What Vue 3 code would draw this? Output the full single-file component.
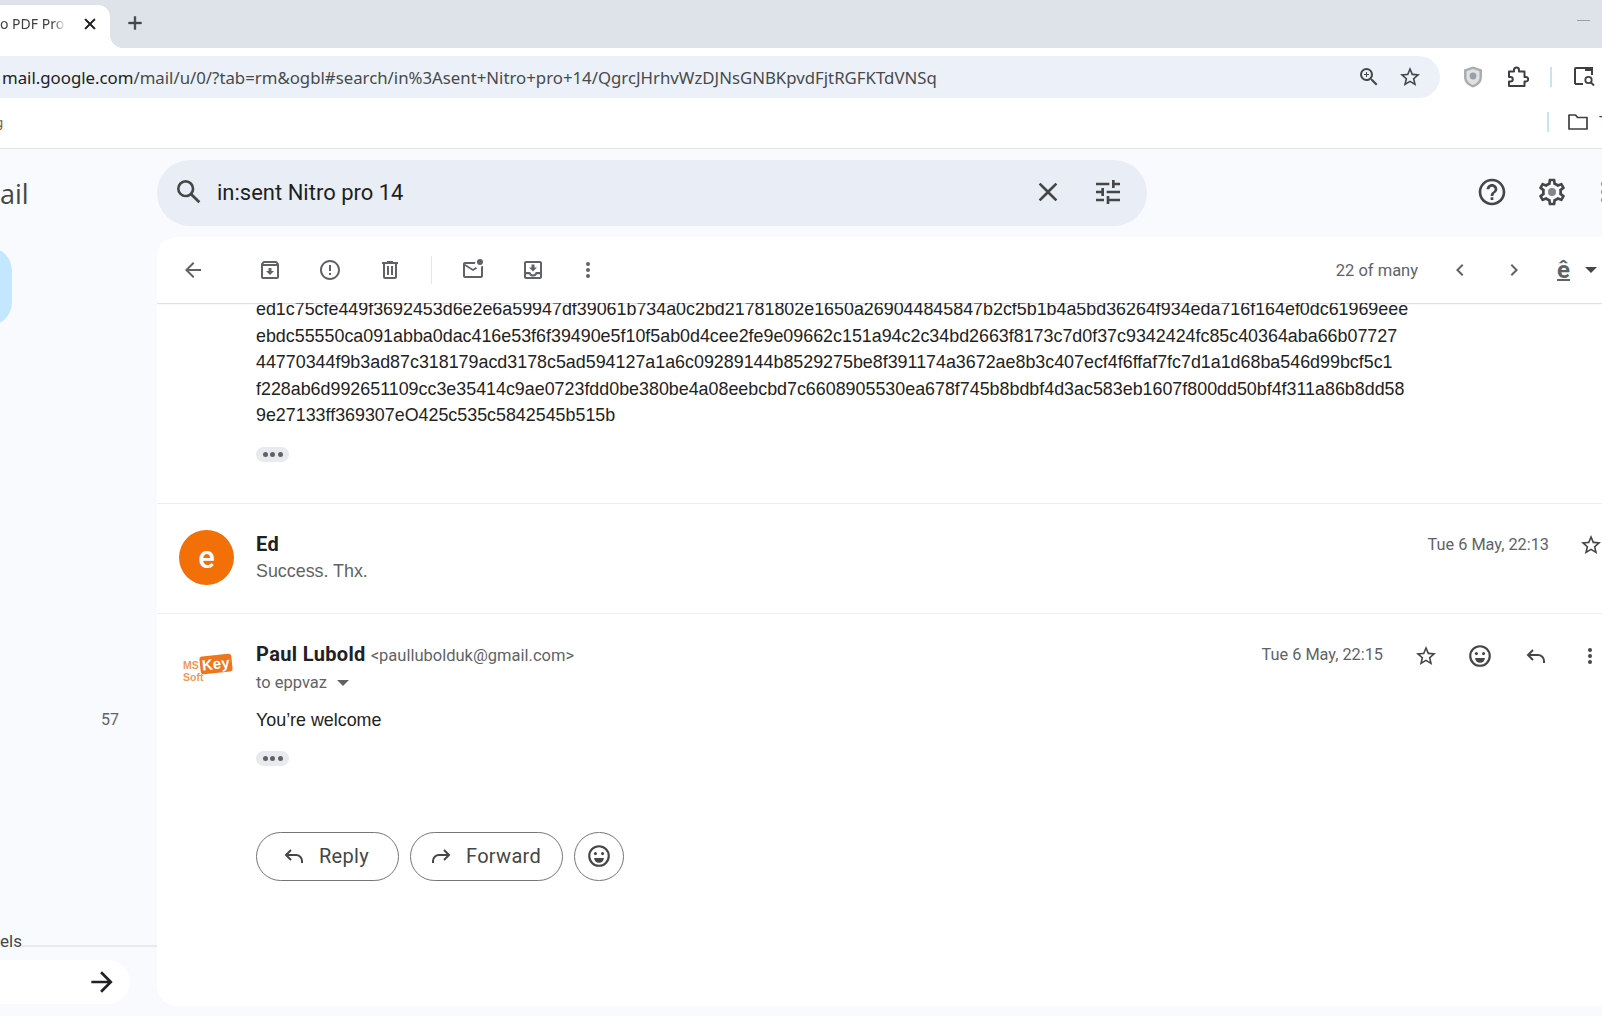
<template>
  <div class="page">
    <!-- browser chrome -->
    <div class="tabstrip">
      <div class="tab">
        <span class="tab-title">o PDF Pro</span>
        <svg class="tab-close" viewBox="0 0 24 24"><path :d="icons.close" /></svg>
      </div>
      <svg class="new-tab" viewBox="0 0 24 24"><path d="M11 5h2v6h6v2h-6v6h-2v-6H5v-2h6z" /></svg>
      <span class="minimize"></span>
    </div>

    <div class="browser-bar">
      <div class="omnibox">
        <span class="url"><span class="url-host">mail.google.com</span>/mail/u/0/?tab=rm&amp;ogbl#search/in%3Asent+Nitro+pro+14/QgrcJHrhvWzDJNsGNBKpvdFjtRGFKTdVNSq</span>
        <svg class="omni-zoom" viewBox="0 0 24 24"><path :d="icons.zoomIn" /></svg>
        <svg class="omni-star" viewBox="0 0 24 24"><path :d="icons.star" /></svg>
      </div>
      <svg class="ext-shield" viewBox="0 0 24 24">
        <path d="M12 1.500l9 3v7.500c0 5.200-3.600 8.800-9 10.500-5.400-1.700-9-5.300-9-10.500V4.500z" fill="#a9adb1" />
        <path d="M12 4l6.500 2.200V12c0 3.900-2.600 6.500-6.500 8-3.900-1.500-6.500-4.100-6.500-8V6.200z" fill="#dfe1e3" />
        <circle cx="12" cy="11" r="3.400" fill="#9aa0a6" />
      </svg>
      <svg class="ext-puzzle" viewBox="0 0 24 24">
        <path d="M4 6.500h5V5a2.500 2.500 0 0 1 5 0v1.500h5.500V12H21a2.200 2.200 0 0 1 0 4.400h-1.500V21H4v-4.500h1.500a2.200 2.200 0 0 0 0-4.500H4z" fill="none" stroke="#3c4043" stroke-width="2" stroke-linejoin="round" />
      </svg>
      <span class="bar-sep"></span>
      <svg class="side-search" viewBox="0 0 24 24">
        <path d="M3 20V5a1 1 0 0 1 1-1h16v7M3 20h8" fill="none" stroke="#3c4043" stroke-width="2" />
        <path d="M13 3h8v4h-8z" fill="#3c4043" />
        <circle cx="16.500" cy="16" r="3.200" fill="none" stroke="#3c4043" stroke-width="1.800" />
        <path d="M19 18.500l3 3" stroke="#3c4043" stroke-width="1.800" />
      </svg>
    </div>

    <div class="bookmarks">
      <span class="bm-cut">g</span>
      <span class="bm-sep"></span>
      <svg class="bm-folder" viewBox="0 0 24 24">
        <path d="M3 5h6.500l2 2.500H21V19H3z" fill="none" stroke="#3c4043" stroke-width="1.700" stroke-linejoin="round" />
      </svg>
      <span class="bm-more">T</span>
    </div>

    <!-- gmail -->
    <div class="gmail">
      <aside class="sidebar">
        <div class="brand">ail</div>
        <div class="compose"></div>
        <div class="count">57</div>
        <div class="labels-row">
          <span class="labels-text">els</span>
          <span class="labels-line"></span>
        </div>
        <div class="meet-pill">
          <svg class="meet-arrow" viewBox="0 0 24 24"><path :d="icons.arrow" /></svg>
        </div>
      </aside>

      <main class="main">
        <header class="top">
          <div class="search">
            <svg class="ic32" viewBox="0 0 24 24"><path :d="icons.search" /></svg>
            <span class="search-text">in:sent Nitro pro 14</span>
            <svg class="ic32 search-clear" viewBox="0 0 24 24"><path :d="icons.close" /></svg>
            <svg class="ic32 search-tune" viewBox="0 0 24 24"><path :d="icons.tune" /></svg>
          </div>
          <svg class="ic32 top-help" viewBox="0 0 24 24"><path :d="icons.help" /></svg>
          <svg class="ic32 top-gear" viewBox="0 0 24 24">
            <path :d="icons.gear" />
            <circle cx="12" cy="12" r="3" fill="#80868b" />
          </svg>
          <svg class="ic32 top-more" viewBox="0 0 24 24"><path :d="icons.more" /></svg>
        </header>

        <section class="card">
          <div class="toolbar">
            <svg class="ic24" viewBox="0 0 24 24"><path :d="icons.back" /></svg>
            <svg class="ic24 tb-first" viewBox="0 0 24 24"><path :d="icons.archive" /></svg>
            <svg class="ic24" viewBox="0 0 24 24"><path :d="icons.report" /></svg>
            <svg class="ic24" viewBox="0 0 24 24"><path :d="icons.trash" /></svg>
            <span class="tb-sep"></span>
            <svg class="ic24 tb-mail" viewBox="0 0 24 24">
              <path :d="icons.unread" />
              <circle cx="19" cy="4" r="3" />
            </svg>
            <svg class="ic24" viewBox="0 0 24 24">
              <path :d="icons.move" />
              <path class="tray" d="M5 16.200h3c.8 1.400 2.300 2.300 4 2.300s3.200-.9 4-2.300h3V19H5z" />
            </svg>
            <svg class="ic24 tb-more" viewBox="0 0 24 24"><path :d="icons.more" /></svg>

            <span class="pager">22 of many</span>
            <svg class="ic24 pager-prev" viewBox="0 0 24 24"><path :d="icons.prev" /></svg>
            <svg class="ic24 pager-next" viewBox="0 0 24 24"><path :d="icons.next" /></svg>
            <span class="input-tool">ê</span>
            <span class="caret input-caret"></span>
          </div>

          <div class="thread">
            <div class="hash-block">
              <div v-for="line in hashLines" :key="line" class="hash-line">{{ line }}</div>
              <div class="dots-pill"><i></i><i></i><i></i></div>
            </div>

            <div class="msg msg-collapsed">
              <div class="avatar-col">
                <div class="avatar">e</div>
              </div>
              <div class="msg-body">
                <div class="name">Ed</div>
                <div class="snippet">Success. Thx.</div>
              </div>
              <div class="msg-right ed-right">
                <span class="date">Tue 6 May, 22:13</span>
                <svg class="ic24 ed-star" viewBox="0 0 24 24"><path :d="icons.star" /></svg>
              </div>
            </div>

            <div class="msg msg-open">
              <div class="avatar-col">
                <div class="logo">
                  <div class="logo-top"><span class="logo-ms">MS</span><span class="logo-key">Key</span></div>
                  <div class="logo-soft">Soft</div>
                </div>
              </div>
              <div class="msg-body">
                <div class="name-line">
                  <span class="name">Paul Lubold</span>
                  <span class="email">&lt;paullubolduk@gmail.com&gt;</span>
                </div>
                <div class="to-line">to eppvaz <span class="caret to-caret"></span></div>
                <div class="content">You’re welcome</div>
                <div class="dots-pill"><i></i><i></i><i></i></div>
                <div class="actions">
                  <button class="pill-btn reply-btn">
                    <svg class="ic24" viewBox="0 0 24 24"><path class="arrow-line" :d="icons.reply" /></svg>
                    Reply
                  </button>
                  <button class="pill-btn forward-btn">
                    <svg class="ic24 flip" viewBox="0 0 24 24"><path class="arrow-line" :d="icons.reply" /></svg>
                    Forward
                  </button>
                  <button class="pill-btn emoji-btn">
                    <svg class="ic26" viewBox="0 0 24 24">
                      <circle class="face" cx="12" cy="12" r="9" />
                      <circle cx="8.700" cy="9.800" r="1.400" />
                      <circle cx="15.300" cy="9.800" r="1.400" />
                      <path d="M7.500 13.800h9a4.500 4.500 0 0 1-9 0z" />
                    </svg>
                  </button>
                </div>
              </div>
              <div class="msg-right open-right">
                <span class="date">Tue 6 May, 22:15</span>
                <svg class="ic24 open-star" viewBox="0 0 24 24"><path :d="icons.star" /></svg>
                <svg class="ic26 open-smile" viewBox="0 0 24 24">
                  <circle class="face" cx="12" cy="12" r="9" />
                  <circle cx="8.700" cy="9.800" r="1.400" />
                  <circle cx="15.300" cy="9.800" r="1.400" />
                  <path d="M7.500 13.800h9a4.500 4.500 0 0 1-9 0z" />
                </svg>
                <svg class="ic24 open-reply" viewBox="0 0 24 24"><path class="arrow-line" :d="icons.reply" /></svg>
                <svg class="ic24 open-more" viewBox="0 0 24 24"><path :d="icons.more" /></svg>
              </div>
            </div>
          </div>
        </section>
      </main>
    </div>
  </div>
</template>

<script setup>
const hashLines = [
  "ed1c75cfe449f3692453d6e2e6a59947df39061b734a0c2bd21781802e1650a269044845847b2cf5b1b4a5bd36264f934eda716f164ef0dc61969eee",
  "ebdc55550ca091abba0dac416e53f6f39490e5f10f5ab0d4cee2fe9e09662c151a94c2c34bd2663f8173c7d0f37c9342424fc85c40364aba66b07727",
  "44770344f9b3ad87c318179acd3178c5ad594127a1a6c09289144b8529275be8f391174a3672ae8b3c407ecf4f6ffaf7fc7d1a1d68ba546d99bcf5c1",
  "f228ab6d992651109cc3e35414c9ae0723fdd0be380be4a08eebcbd7c6608905530ea678f745b8bdbf4d3ac583eb1607f800dd50bf4f311a86b8dd58",
  "9e27133ff369307eO425c535c5842545b515b",
];

// material icon paths
const icons = {
  close: "M19 6.410L17.590 5 12 10.590 6.410 5 5 6.410 10.590 12 5 17.590 6.410 19 12 13.410 17.590 19 19 17.590 13.410 12z",
  zoomIn: "M15.500 14h-.790l-.280-.270A6.471 6.471 0 0 0 16 9.500 6.500 6.500 0 1 0 9.500 16c1.610 0 3.090-.590 4.230-1.570l.270.280v.790l5 4.990L20.490 19l-4.990-5zm-6 0C7.010 14 5 11.990 5 9.500S7.010 5 9.500 5 14 7.010 14 9.500 11.990 14 9.500 14zM12 10h-2v2H9v-2H7V9h2V7h1v2h2v1z",
  star: "M22 9.240l-7.190-.620L12 2 9.190 8.630 2 9.240l5.460 4.730L5.820 21 12 17.270 18.180 21l-1.630-7.030L22 9.240zM12 15.400l-3.760 2.270 1-4.280-3.320-2.880 4.380-.380L12 6.100l1.710 4.040 4.380.380-3.320 2.880 1 4.280L12 15.400z",
  arrow: "M12 4l-1.410 1.410L16.170 11H4v2h12.170l-5.580 5.590L12 20l8-8z",
  search: "M20.490 19l-5.730-5.730C15.530 12.200 16 10.910 16 9.500A6.500 6.500 0 1 0 9.500 16c1.410 0 2.700-.470 3.770-1.240L19 20.490 20.490 19zM5 9.500C5 7.010 7.010 5 9.500 5S14 7.010 14 9.500 11.990 14 9.500 14 5 11.990 5 9.500z",
  tune: "M3 17v2h6v-2H3zM3 5v2h10V5H3zm10 16v-2h8v-2h-8v-2h-2v6h2zM7 9v2H3v2h4v2h2V9H7zm14 4v-2H11v2h10zm-6-4h2V7h4V5h-4V3h-2v6z",
  help: "M11 18h2v-2h-2v2zm1-16C6.480 2 2 6.480 2 12s4.480 10 10 10 10-4.480 10-10S17.520 2 12 2zm0 18c-4.410 0-8-3.590-8-8s3.590-8 8-8 8 3.590 8 8-3.590 8-8 8zm0-14c-2.210 0-4 1.790-4 4h2c0-1.100.9-2 2-2s2 .9 2 2c0 2-3 1.750-3 5h2c0-2.250 3-2.500 3-5 0-2.210-1.790-4-4-4z",
  gear: "M19.430 12.980c.040-.320.070-.640.070-.980 0-.340-.030-.660-.070-.980l2.110-1.650c.190-.150.240-.420.120-.640l-2-3.460c-.090-.160-.260-.250-.440-.250-.060 0-.120.010-.170.030l-2.490 1c-.520-.400-1.080-.730-1.690-.980l-.380-2.650C14.460 2.180 14.250 2 14 2h-4c-.250 0-.460.180-.490.420l-.380 2.650c-.610.250-1.170.590-1.690.980l-2.490-1c-.060-.020-.120-.030-.180-.030-.170 0-.340.090-.430.250l-2 3.460c-.130.220-.070.490.120.640l2.110 1.650c-.040.320-.070.650-.070.980 0 .330.030.660.070.980l-2.110 1.650c-.190.150-.240.420-.12.640l2 3.460c.090.160.260.250.440.250.060 0 .120-.010.170-.030l2.490-1c.520.400 1.080.730 1.690.980l.380 2.650c.030.240.240.420.49.420h4c.250 0 .460-.180.490-.42l.380-2.650c.610-.250 1.170-.590 1.690-.980l2.490 1c.060.020.120.030.180.030.170 0 .340-.090.430-.250l2-3.460c.120-.220.070-.490-.120-.640l-2.110-1.650zm-1.980-1.710c.040.310.050.520.050.730 0 .210-.020.430-.050.730l-.140 1.130.890.700 1.080.840-.7 1.210-1.270-.510-1.040-.420-.9.680c-.430.320-.84.560-1.250.730l-1.060.43-.160 1.130-.2 1.350h-1.400l-.190-1.350-.160-1.130-1.060-.43c-.43-.180-.83-.41-1.230-.71l-.91-.7-1.060.43-1.270.51-.7-1.210 1.080-.84.89-.7-.14-1.130c-.03-.31-.05-.54-.05-.74s.02-.43.05-.73l.14-1.130-.89-.7-1.080-.84.7-1.210 1.270.51 1.040.42.9-.68c.43-.32.84-.56 1.250-.73l1.060-.43.16-1.130.2-1.350h1.390l.19 1.350.16 1.130 1.060.43c.43.18.83.41 1.230.71l.91.7 1.060-.43 1.270-.51.7 1.210-1.070.85-.89.7.14 1.130z",
  more: "M12 8a2 2 0 1 0 0-4 2 2 0 0 0 0 4zm0 2a2 2 0 1 0 0 4 2 2 0 0 0 0-4zm0 6a2 2 0 1 0 0 4 2 2 0 0 0 0-4z",
  back: "M20 11H7.830l5.590-5.590L12 4l-8 8 8 8 1.410-1.410L7.830 13H20v-2z",
  archive: "M20.540 5.230l-1.390-1.680C18.880 3.210 18.470 3 18 3H6c-.470 0-.880.210-1.160.550L3.460 5.230C3.170 5.570 3 6.020 3 6.500V19c0 1.100.9 2 2 2h14c1.100 0 2-.9 2-2V6.500c0-.480-.170-.930-.460-1.270zM6.240 5h11.520l.830 1H5.420l.820-1zM5 19V8h14v11H5zm8.450-9h-2.900v3H8l4 4 4-4h-2.550z",
  report: "M11 15h2v2h-2zm0-8h2v6h-2zm.990-5C6.470 2 2 6.480 2 12s4.470 10 9.990 10C17.520 22 22 17.520 22 12S17.520 2 11.990 2zM12 20c-4.420 0-8-3.580-8-8s3.580-8 8-8 8 3.580 8 8-3.580 8-8 8z",
  trash: "M15 4V3H9v1H4v2h1v13c0 1.100.9 2 2 2h10c1.100 0 2-.9 2-2V6h1V4h-5zm2 15H7V6h10v13zM9 8h2v9H9zm4 0h2v9h-2z",
  unread: "M20 8.500V18H4V8l8 5 4.200-2.600c-.5-.3-1-.8-1.300-1.300L12 11 4 6h10c0-.7.1-1.400.4-2H4c-1.100 0-2 .9-2 2v12c0 1.100.9 2 2 2h16c1.100 0 2-.9 2-2V7.700c-.6.4-1.300.7-2 .8z",
  move: "M19 3H5c-1.100 0-2 .9-2 2v14c0 1.100.9 2 2 2h14c1.100 0 2-.9 2-2V5c0-1.100-.9-2-2-2zm0 2v9h-4.200c-.5 1.500-1.500 2.500-2.800 2.500s-2.300-1-2.800-2.500H5V5h14zm-3 4.500h-2.500V6.500h-3v3H8l4 4 4-4z",
  prev: "M15.410 7.410L14 6l-6 6 6 6 1.410-1.410L10.830 12z",
  next: "M10 6L8.590 7.410 13.170 12l-4.580 4.590L10 18l6-6z",
  reply: "M9 6l-5 5 5 5M4 11h10a6 6 0 0 1 6 6v2",
};
</script>

<style>
html,
body {
  margin: 0;
  background: #fff;
}
</style>

<style scoped>
.page {
  width: 1602px;
  height: 1016px;
  overflow: hidden;
  display: flex;
  flex-direction: column;
  background: #fff;
  font-family: Roboto, "Liberation Sans", sans-serif;
  color: #202124;
}

svg {
  flex: none;
  fill: #444746;
}

.ic24 {
  width: 24px;
  height: 24px;
}

.ic26 {
  width: 26px;
  height: 26px;
}

.ic32 {
  width: 32px;
  height: 32px;
}

.flip {
  transform: scaleX(-1);
}

.arrow-line {
  fill: none;
  stroke: #444746;
  stroke-width: 2;
}

.face {
  fill: none;
  stroke: #444746;
  stroke-width: 2;
}

.caret {
  display: inline-block;
  width: 0;
  height: 0;
  border-left: 6px solid transparent;
  border-right: 6px solid transparent;
  border-top: 6px solid #444746;
}

/* tab strip */
.tabstrip {
  height: 48px;
  flex: none;
  display: flex;
  align-items: flex-end;
  background: #dee3ea;
}

.tab {
  width: 110px;
  height: 43px;
  flex: none;
  box-sizing: border-box;
  display: flex;
  align-items: center;
  padding-bottom: 6px;
  background: #fff;
  border-top-right-radius: 12px;
  position: relative;
}

.tab::after {
  content: "";
  position: absolute;
  left: 100%;
  bottom: 0;
  width: 14px;
  height: 14px;
  background: radial-gradient(circle at 100% 0, transparent 14px, #fff 14.500px);
}

.tab-title {
  width: 66px;
  overflow: hidden;
  white-space: nowrap;
  font-family: "Noto Sans", sans-serif;
  font-size: 14px;
  color: #3c4043;
  -webkit-mask-image: linear-gradient(90deg, #000 80%, transparent);
  mask-image: linear-gradient(90deg, #000 80%, transparent);
}

.tab-close {
  width: 18px;
  height: 18px;
  margin-left: 15px;
  fill: #202124;
  stroke: #202124;
  stroke-width: 1;
}

.new-tab {
  width: 22px;
  height: 22px;
  margin: 0 0 14px 14px;
  stroke: #444746;
  stroke-width: 0.500;
}

.minimize {
  width: 13px;
  height: 1px;
  margin: 0 12px 27px auto;
  background: #9aa0a6;
}

/* address bar */
.browser-bar {
  height: 50px;
  flex: none;
  display: flex;
  align-items: flex-start;
  box-sizing: border-box;
  padding-top: 8px;
}

.omnibox {
  width: 1440px;
  height: 42px;
  flex: none;
  box-sizing: border-box;
  display: flex;
  align-items: center;
  padding-left: 2px;
  background: #ecf1f9;
  border-radius: 0 21px 21px 0;
}

.url {
  flex: 1;
  white-space: nowrap;
  font-family: "Noto Sans", sans-serif;
  font-size: 16.800px;
  color: #474a4d;
}

.url-host {
  color: #202124;
}

.omni-zoom {
  width: 24px;
  height: 24px;
  margin-right: 17px;
}

.omni-star {
  width: 24px;
  height: 24px;
  margin-right: 18px;
}

.ext-shield {
  width: 24px;
  height: 26px;
  margin: 8px 0 0 21px;
}

.ext-puzzle {
  width: 24px;
  height: 24px;
  margin: 9px 0 0 20px;
}

.bar-sep {
  width: 2px;
  height: 20px;
  margin: 11px 0 0 21px;
  background: #c6e4f7;
}

.side-search {
  width: 24px;
  height: 24px;
  margin: 8px 0 0 20px;
}

/* bookmarks */
.bookmarks {
  height: 51px;
  flex: none;
  box-sizing: border-box;
  display: flex;
  align-items: center;
  border-bottom: 1px solid #e3e3e3;
  padding-bottom: 2px;
  overflow: hidden;
}

.bm-cut {
  width: 3px;
  overflow: hidden;
  direction: rtl;
  font-size: 13px;
  color: #7a5a3a;
}

.bm-sep {
  width: 2px;
  height: 20px;
  margin-left: auto;
  background: #c6e4f7;
}

.bm-folder {
  width: 24px;
  height: 24px;
  margin-left: 17px;
}

.bm-more {
  width: 10px;
  flex: none;
  margin: 0 -7px 0 9px;
  font-size: 14px;
  color: #3c4043;
}

/* gmail shell */
.gmail {
  flex: 1;
  min-height: 0;
  display: flex;
  background: #f8fafd;
}

.sidebar {
  width: 157px;
  flex: none;
  display: flex;
  flex-direction: column;
}

.brand {
  margin-top: 25px;
  height: 40px;
  line-height: 40px;
  font-family: "Open Sans", sans-serif;
  font-size: 27px;
  color: #444746;
}

.compose {
  width: 72px;
  height: 79px;
  margin: 33px 0 0 -60px;
  border-radius: 24px;
  background: #c2e7ff;
}

.count {
  margin: 384px 0 0 101px;
  line-height: 20px;
  font-size: 16px;
  color: #5f6368;
}

.labels-row {
  margin-top: 201px;
  display: flex;
  align-items: flex-end;
}

.labels-text {
  line-height: 20px;
  font-size: 17px;
  color: #444746;
}

.labels-line {
  flex: 1;
  height: 2px;
  margin-bottom: 4px;
  background: #e8e9ec;
}

.meet-pill {
  width: 130px;
  height: 44px;
  margin-top: 9px;
  box-sizing: border-box;
  display: flex;
  align-items: center;
  justify-content: flex-end;
  padding-right: 12px;
  background: #fff;
  border-radius: 0 22px 22px 0;
}

.meet-arrow {
  width: 32px;
  height: 32px;
  fill: #202124;
}

.main {
  flex: 1;
  min-width: 0;
  display: flex;
  flex-direction: column;
  padding-bottom: 10px;
}

.top {
  height: 88px;
  flex: none;
  box-sizing: border-box;
  padding-top: 11px;
  display: flex;
  align-items: flex-start;
}

.search {
  width: 990px;
  height: 66px;
  flex: none;
  box-sizing: border-box;
  display: flex;
  align-items: center;
  padding: 0 0 2px 16px;
  background: #e9eef6;
  border-radius: 33px;
}

.search-text {
  flex: 1;
  margin-left: 12px;
  font-size: 22px;
  color: #1f1f1f;
}

.search-clear {
  margin-right: 28px;
}

.search-tune {
  margin-right: 23px;
}

.top-help {
  margin: 16px 0 0 329px;
}

.top-gear {
  margin: 16px 0 0 28px;
}

.top-more {
  margin: 16px 0 0 20px;
}

/* conversation card */
.card {
  flex: 1;
  min-height: 0;
  display: flex;
  flex-direction: column;
  background: #fff;
  border-radius: 20px 0 0 20px;
  overflow: hidden;
}

.toolbar {
  height: 66px;
  flex: none;
  box-sizing: border-box;
  display: flex;
  align-items: center;
  gap: 36px;
  padding: 0 5px 0 24px;
  background: #fff;
  box-shadow: 0 1px 1px rgba(60, 64, 67, 0.16);
  position: relative;
  z-index: 1;
}

.toolbar svg {
  fill: #5f6368;
}

.toolbar svg .tray {
  fill: #fff;
}

.tb-first {
  margin-left: 17px;
}

.tb-sep {
  width: 1px;
  height: 28px;
  margin: 0 -7px;
  background: #e3e5e8;
}

.tb-more {
  margin-left: -5px;
}

.pager {
  margin-left: auto;
  font-size: 16.500px;
  color: #5f6368;
}

.pager-prev,
.pager-next {
  margin-left: -6px;
}

.input-tool {
  margin-left: -5px;
  font-size: 24px;
  font-weight: 700;
  color: #5f6368;
  text-decoration: underline;
  text-decoration-thickness: 2px;
}

.input-caret {
  margin-left: -21px;
}

.thread {
  flex: 1;
  min-height: 0;
}

.hash-block {
  margin-top: -7px;
  padding: 0 0 41px 99px;
  border-bottom: 1px solid #eceff1;
  font-family: "Liberation Sans", Arial, sans-serif;
  font-size: 17.870px;
  line-height: 26.600px;
  color: #222;
}

.hash-line {
  white-space: nowrap;
}

.dots-pill {
  width: 33px;
  height: 15px;
  display: flex;
  align-items: center;
  justify-content: center;
  gap: 2.500px;
  background: #e8eaed;
  border-radius: 8px;
}

.hash-block .dots-pill {
  margin-top: 18px;
}

.dots-pill i {
  width: 5px;
  height: 5px;
  border-radius: 50%;
  background: #5f6368;
}

.msg {
  display: flex;
  align-items: flex-start;
  padding-top: 27px;
}

.msg-collapsed {
  height: 110px;
  box-sizing: border-box;
  border-bottom: 1px solid #eceff1;
}

.avatar-col {
  width: 99px;
  flex: none;
  box-sizing: border-box;
  padding-left: 22px;
}

.avatar {
  width: 55px;
  height: 55px;
  margin-top: -1px;
  border-radius: 50%;
  background: #f36f08;
  color: #fff;
  font-size: 31px;
  font-weight: 500;
  line-height: 55px;
  text-align: center;
}

.msg-body {
  flex: 1;
  min-width: 0;
}

.name {
  line-height: 27px;
  font-size: 20px;
  font-weight: 700;
  letter-spacing: 0.350px;
  color: #202124;
}

.snippet {
  line-height: 27px;
  font-family: "Liberation Sans", Arial, sans-serif;
  font-size: 17.870px;
  color: #5f6368;
}

.msg-right {
  flex: none;
  display: flex;
  align-items: center;
  height: 27px;
}

.ed-right {
  margin-right: -1px;
}

.date {
  font-size: 16.300px;
  color: #5f6368;
}

.ed-star {
  margin: 2px 0 0 30px;
}

.name-line {
  display: flex;
  align-items: baseline;
  gap: 5px;
}

.email {
  font-size: 16.500px;
  color: #5f6368;
}

.to-line {
  margin-top: 1px;
  line-height: 27px;
  font-size: 16.500px;
  color: #5f6368;
}

.to-caret {
  margin: 0 0 2px 6px;
  vertical-align: middle;
  border-top-color: #5f6368;
}

.content {
  margin-top: 11px;
  line-height: 27px;
  font-family: "Liberation Sans", Arial, sans-serif;
  font-size: 17.870px;
  color: #222;
}

.msg-open .dots-pill {
  margin-top: 17px;
}

.logo {
  width: 50px;
  margin: 14px 0 0 4px;
  font-family: "Liberation Sans", Arial, sans-serif;
  font-weight: 700;
  color: #f09a5c;
}

.logo-top {
  display: flex;
  align-items: center;
}

.logo-ms {
  font-size: 10.500px;
  line-height: 14px;
  margin: 3px 1px 0 0;
}

.logo-key {
  padding: 0 2px;
  background: #f0761d;
  color: #fff;
  font-size: 15px;
  line-height: 18px;
  border-radius: 3px;
  transform: rotate(-6deg);
}

.logo-soft {
  margin-top: -2px;
  font-size: 10.500px;
  line-height: 12px;
}

.open-right svg {
  margin-top: 3px;
}

.open-star {
  margin-left: 31px;
}

.open-smile {
  margin-left: 29px;
}

.open-reply {
  margin-left: 31px;
}

.open-more {
  margin-left: 30px;
}

.actions {
  margin-top: 66px;
  display: flex;
  gap: 11px;
}

.pill-btn {
  height: 49px;
  box-sizing: border-box;
  display: flex;
  align-items: center;
  border: 1px solid #747775;
  border-radius: 25px;
  background: #fff;
  font-family: Roboto, sans-serif;
  font-size: 20px;
  font-weight: 400;
  letter-spacing: 0.300px;
  color: #444746;
}

.reply-btn {
  width: 143px;
  padding: 0 0 0 25px;
  gap: 13px;
}

.forward-btn {
  width: 153px;
  padding: 0 0 0 18px;
  gap: 13px;
}

.emoji-btn {
  width: 50px;
  justify-content: center;
  padding: 0;
}
</style>
